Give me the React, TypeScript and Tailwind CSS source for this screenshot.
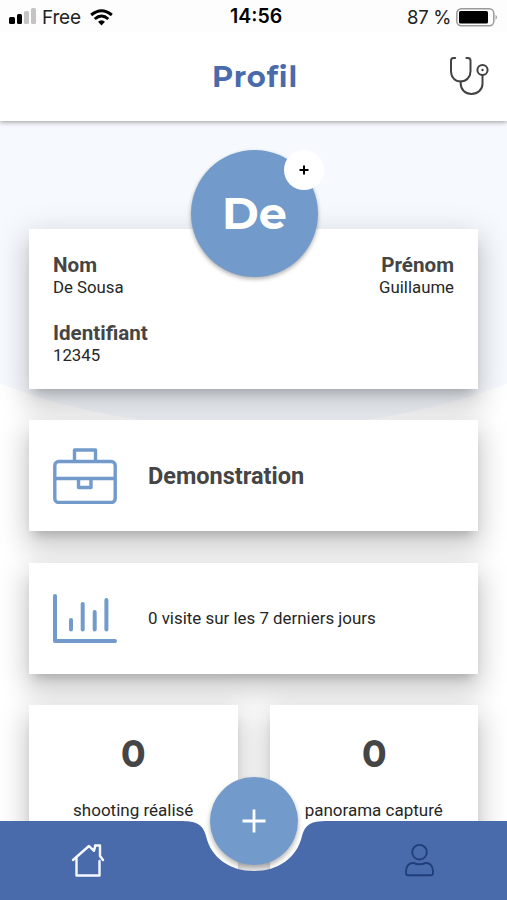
import type { ReactNode } from "react";

const cardShadow =
  "relative bg-white shadow-[0_8px_10px_-5px_rgba(0,0,0,0.2),0_16px_24px_2px_rgba(0,0,0,0.12),0_6px_30px_5px_rgba(0,0,0,0.1)]";
const display = "font-['Montserrat','Inter',sans-serif]";

function StatusBar() {
  return (
    <div className="relative flex h-8 items-center justify-between bg-[#fdfdfd] px-[9px] pt-[2px] font-['Inter','Liberation_Sans',sans-serif] text-black">
      <div className="flex items-center">
        <div className="flex h-4 items-end gap-[2px] pb-[1px]">
          <span className="h-[7px] w-[6px] rounded-[1.5px] bg-black" />
          <span className="h-[10px] w-[5px] rounded-[1.5px] bg-black" />
          <span className="h-[13px] w-[5px] rounded-[1.5px] bg-[#c4c4c4]" />
          <span className="h-4 w-[5px] rounded-[1.5px] bg-[#c4c4c4]" />
        </div>
        <span className="ml-[6px] w-12 text-[19px] leading-none tracking-[-0.2px] text-[#222]">Free</span>
        <svg width="23" height="17" viewBox="0 0 23 17" fill="none" stroke="#000" strokeWidth="3">
          <path d="M1.2 6Q11.5-2.5 21.8 6" />
          <path d="M4.7 10Q11.5 4 18.3 10" />
          <path d="M8 12.7Q11.5 9.7 15 12.7L11.5 16.4Z" fill="#000" stroke="none" />
        </svg>
      </div>
      <span className="absolute left-[230px] text-[19.5px] leading-none font-semibold tracking-[0px]">14:56</span>
      <div className="flex items-center">
        <span className="mr-[5px] text-[18.5px] leading-none tracking-[-0.35px] text-[#222]">87 %</span>
        <svg width="42" height="19" viewBox="0 0 42 19" fill="none">
          <rect x="0.8" y="0.8" width="37" height="17" rx="4.5" stroke="#999" strokeWidth="1.5" />
          <rect x="3" y="3" width="29" height="12.5" rx="1.5" fill="#000" />
          <path d="M39.6 6.5Q42 9.3 39.6 12Z" fill="#888" />
        </svg>
      </div>
    </div>
  );
}

function Header() {
  return (
    <header className="relative z-10 bg-white shadow-[0_1px_5px_rgba(0,0,0,0.4)]">
      <StatusBar />
      <div className="relative flex h-[89px] items-center justify-center">
        <h1 className={`${display} pl-[3px] text-[29px] leading-none font-bold tracking-[0.85px] text-[#496bac]`}>Profil</h1>
        <svg className="absolute top-[24px] right-[16px]" width="42" height="42" viewBox="0 0 42 42" fill="none" stroke="#424242" strokeWidth="2" strokeLinecap="round">
          <path d="M6.2 2H4.5Q2 2 2 4.8V15.5C2 21 6 25.5 11.7 25.5S21.5 21 21.5 15.5V4.8Q21.5 2 19 2H17.4" />
          <path d="M11.7 25.5V27.5C11.7 33.5 16.2 38 22.5 38S33.5 33.5 33.5 28V19.5" />
          <circle cx="33.5" cy="14" r="5.1" />
          <circle cx="33.5" cy="14" r="1.2" fill="#424242" stroke="none" />
        </svg>
      </div>
    </header>
  );
}

function Field({ label, value }: { label: string; value: string }) {
  return (
    <div>
      <div className="text-[20.6px] leading-[22px] font-bold text-[#454545]">{label}</div>
      <div className="text-[16.8px] leading-[22px] text-[#262626]">{value}</div>
    </div>
  );
}

function Row({ icon, children }: { icon: ReactNode; children: ReactNode }) {
  return (
    <section className={`${cardShadow} flex h-[111px] items-center pl-6`}>
      {icon}
      <div className="ml-[31px]">{children}</div>
    </section>
  );
}

function Counter({ label }: { label: string }) {
  return (
    <section className={`${cardShadow} -mt-px flex h-[190px] flex-1 flex-col items-center pt-[27px]`}>
      <div className={`${display} scale-x-[0.93] text-[39px] leading-[42px] font-bold text-[#454545]`}>0</div>
      <div className="mt-[25px] text-[17px] leading-[22px] whitespace-nowrap text-[#262626]">{label}</div>
    </section>
  );
}

function Navigation() {
  return (
    <nav className="absolute inset-x-0 bottom-0 z-20 h-[79px]">
      <svg className="absolute inset-0" width="507" height="79" viewBox="0 0 507 79">
        <path d="M0 0H180C196 0 203 3 206 15C211 37 230 50 254 50S297 37 302 15C305 3 312 0 326 0H507V79H0Z" fill="#496bac" />
      </svg>
      <div className="relative flex justify-between px-[71px] pt-[22px]">
        <svg width="34" height="36" viewBox="0 0 34 36" fill="none" stroke="#f5f9ff" strokeWidth="2.4" strokeLinecap="round" strokeLinejoin="round">
          <path d="M2 17L18 3L23 7.8L24 4V2.5H29V13L32 17" />
          <path d="M5.5 15.5V32.5H28.5V18" />
        </svg>
        <svg width="32" height="36" viewBox="0 0 32 36" fill="none" stroke="#213e78" strokeWidth="1.9" strokeLinejoin="round">
          <circle cx="15.5" cy="9.2" r="7.3" />
          <path d="M9.5 20C5 19.5 2 23.5 2 28V30Q2 32.2 4.2 32.2H26.8Q29 32.2 29 30V28C29 23.5 26 19.5 21.5 20Q15.5 22.5 9.5 20Z" />
        </svg>
      </div>
      <button className="absolute -top-[44px] left-[210px] flex size-[88px] items-center justify-center rounded-full bg-[#729bcb] shadow-[0_3px_5px_rgba(0,0,0,0.3)]" aria-label="Ajouter">
        <svg width="24" height="24" viewBox="0 0 24 24" stroke="#fff" strokeWidth="2.8">
          <path d="M12 0.5V23.5M0.5 12H23.5" />
        </svg>
      </button>
    </nav>
  );
}

export default function App() {
  return (
    <div className="relative flex h-[900px] w-[507px] flex-col overflow-hidden bg-white font-['Roboto',sans-serif]">
      <Header />
      <main className="relative min-h-0 flex-1 px-[29px] pt-[108px]">
        <svg className="absolute top-0 left-0" width="507" height="310" viewBox="0 0 507 310">
          <path d="M0 0H507V263Q390 307 253 307T0 263Z" fill="#f6faff" />
        </svg>
        <div className="relative flex flex-col gap-8">
          <section className={`${cardShadow} -mb-px h-[160px] px-6 pt-[25px]`}>
            <div className="flex justify-between">
              <Field label="Nom" value="De Sousa" />
              <div className="text-right">
                <Field label="Prénom" value="Guillaume" />
              </div>
            </div>
            <div className="mt-6">
              <Field label="Identifiant" value="12345" />
            </div>
            <div className="absolute -top-[79px] left-[162px] flex size-[127px] items-center justify-center rounded-full bg-[#729bcb] shadow-[0_2px_4px_rgba(0,0,0,0.32)]">
              <span className={`${display} text-[44.5px] leading-none font-bold text-white`}>De</span>
              <span className="absolute top-0 left-[93px] flex size-10 items-center justify-center rounded-full bg-white">
                <svg width="10" height="10" viewBox="0 0 10 10" stroke="#000" strokeWidth="2">
                  <path d="M5 0.5V9.5M0.5 5H9.5" />
                </svg>
              </span>
            </div>
          </section>
          <Row
            icon={
              <svg width="64" height="56" viewBox="0 0 64 56" fill="none" stroke="#729bcb" strokeWidth="3.4" strokeLinejoin="round">
                <rect x="1.8" y="13.5" width="60.4" height="41" rx="4" />
                <path d="M21.5 13V2H42.5V13M2 30.5H62M25.5 31V39.5H38V31" />
              </svg>
            }
          >
            <h2 className="pt-[3px] text-[23.5px] leading-none font-bold text-[#454545]">Demonstration</h2>
          </Row>
          <Row
            icon={
              <svg width="64" height="49" viewBox="0 0 64 49" fill="none" stroke="#729bcb" strokeWidth="4" strokeLinecap="round" strokeLinejoin="round">
                <path d="M2 2V47H62M18 26V35.5M29.7 10V35.5M41.7 18V35.5M53.4 6V35.5" />
              </svg>
            }
          >
            <p className="text-[16.9px] leading-none text-[#262626]">0 visite sur les 7 derniers jours</p>
          </Row>
          <div className="flex gap-8">
            <Counter label="shooting réalisé" />
            <Counter label="panorama capturé" />
          </div>
        </div>
      </main>
      <Navigation />
    </div>
  );
}
